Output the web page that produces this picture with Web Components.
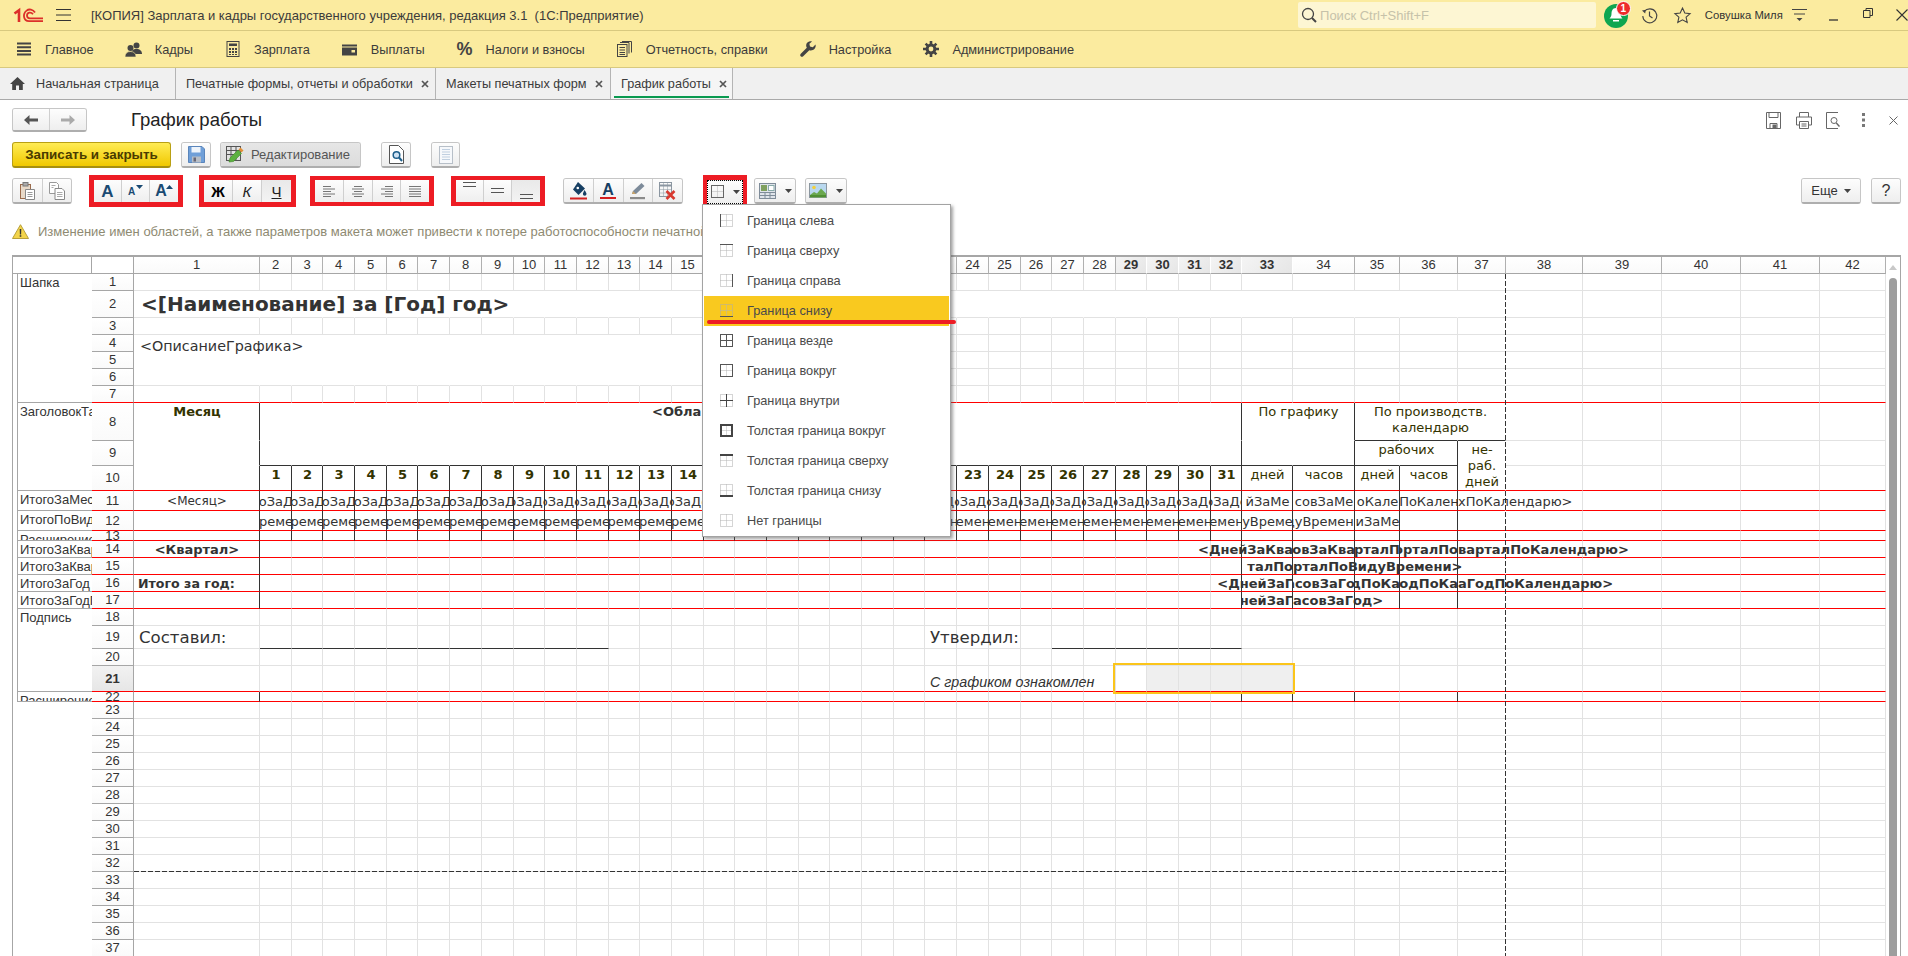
<!DOCTYPE html>
<html lang="ru"><head><meta charset="utf-8"><title>График работы</title>
<style>html,body{margin:0;padding:0;overflow:hidden;background:#fff}</style></head>
<body>
<x-app>
  <x-titlebar slot="top"></x-titlebar>
  <x-menubar slot="top"></x-menubar>
  <x-tabs slot="top"></x-tabs>
  <x-formhead slot="top"></x-formhead>
  <x-cmdbar slot="top"></x-cmdbar>
  <x-toolbar slot="top"></x-toolbar>
  <x-warning slot="top"></x-warning>
  <x-sheet slot="main"></x-sheet>
  <x-bordermenu slot="over"></x-bordermenu>
</x-app>
<script>
const def=(name,css,html)=>customElements.define(name,class extends HTMLElement{
  constructor(){super();this.attachShadow({mode:'open'});}
  connectedCallback(){this.shadowRoot.innerHTML='<style>'+css+'</style>'+(typeof html==='function'?html(this):html);}
});
const bi=(solid)=>`<rect x=".5" y=".5" width="12" height="12" fill="none" stroke="#aaa" stroke-dasharray="1 1"/><path d="M6.500 .5V12.500M.5 6.500H12.500" stroke="#b5b5b5" stroke-dasharray="1 1"/>`+solid;
const ICONS={
 logo:[30,15,`<g fill="none" stroke="#dc2f2a"><path d="M1.500 5.500 6 2.200V14" stroke-width="2.600"/><path d="M22 4.500C20 1.400 16 .6 13.600 2.600 9.600 5.600 10 13 16 13.200H30" stroke-width="1.800"/><path d="M20 6.200C18 3.600 14 4.200 14 7.600 14 10 15.800 10.400 17 10.400H30" stroke-width="1.800"/></g>`],
 burger:[15,12,`<path d="M0 .5H15M0 6H15M0 11.500H15" stroke="#333" stroke-width="1"/>`],
 search:[16,17,`<circle cx="7" cy="7" r="5.500" fill="none" stroke="#444" stroke-width="1.300"/><path d="M11 11l4 4" stroke="#444" stroke-width="2"/>`],
 bell:[26,26,`<ellipse cx="12" cy="14" rx="12" ry="12" fill="#0fa650"/><path d="M12 6c-3.500 0-4.500 3-4.500 6 0 2.500-1.200 3.500-2 4.500H18.500c-.8-1-2-2-2-4.500 0-3-1-6-4.500-6z" fill="#fff"/><path d="M9 18h6v1.500H9z" fill="#fff"/>`],
 history:[17,17,`<path d="M3.300 4.500A7 7 0 1 1 1.800 9" fill="none" stroke="#444" stroke-width="1.100"/><path d="M1 3.500 4.800 2.800 4.200 6.500z" fill="#444"/><path d="M8.500 4.500V9l3 2" fill="none" stroke="#444" stroke-width="1.200"/>`],
 star:[17,17,`<path d="M8.500 1l2.300 5 5.300.6-4 3.600 1.100 5.300-4.700-2.700-4.700 2.700 1.100-5.300-4-3.600 5.300-.6z" fill="none" stroke="#444" stroke-width="1.100"/>`],
 usermenu:[15,12,`<path d="M0 .5H15M2 5H13" stroke="#444"/><path d="M4.500 9h6L7.500 12z" fill="#444"/>`],
 min:[9,2,`<path d="M0 1H9" stroke="#333" stroke-width="1.300"/>`],
 restore:[10,10,`<path d="M.5 2.500h6.500v7H.5zM3 2.500V.5h6.500v7H7" fill="none" stroke="#333"/>`],
 closew:[12,12,`<path d="M.5.5l11 11M11.500.5l-11 11" stroke="#333" stroke-width="1.100"/>`],
 m_main:[16,14,`<path d="M1 1.500H15M1 5.200H15M1 8.900H15M1 12.600H15" stroke="#444" stroke-width="2"/>`],
 m_people:[17,15,`<circle cx="11.500" cy="3.500" r="3" fill="#444"/><path d="M6 12c0-3 2-5 5.500-5S17 9 17 12z" fill="#444"/><circle cx="5.500" cy="6" r="3" fill="#444"/><path d="M0 15c0-3.500 2-5.500 5.500-5.500S11 11.500 11 15z" fill="#444" stroke="#fbeb9f" stroke-width=".6"/>`],
 m_calc:[14,16,`<rect x="1" y=".5" width="12" height="15" fill="none" stroke="#444"/><path d="M3 2.500h8v2.500H3z" fill="#444"/><path d="M3 7h2v2H3zM6 7h2v2H6zM9 7h2v2H9zM3 10h2v2H3zM6 10h2v2H6zM9 10h2v2H9zM3 13h2v1H3zM6 13h2v1H6zM9 13h2v1H9z" fill="#444"/>`],
 m_wallet:[15,13,`<path d="M0 1.500h15v2H0z" fill="#444"/><path d="M0 4.500h15v8H0z" fill="#444"/><rect x="9.500" y="7" width="3.500" height="2.500" fill="#fbeb9f"/>`],
 m_docs:[15,16,`<g fill="none" stroke="#444"><rect x=".5" y="3.500" width="9.500" height="12"/><path d="M3 1.500h9v11M5 .5h9.500v11"/><path d="M2.500 6.500h5.500M2.500 9h5.500M2.500 11.500h5.500M2.500 13.500h5.500"/></g>`],
 m_wrench:[16,16,`<path d="M15.500 3.500 12.800 6.200 10 5.500 9.400 2.800 12 .4C9.600-.4 6.600 1 6.200 3.800 6 5 6.400 6 6.800 6.800L.8 12.800C0 13.600 0 14.600.7 15.300 1.400 16 2.400 16 3.200 15.200L9.300 9.200C12.800 10.300 16.600 7.500 15.500 3.500z" fill="#444"/>`],
 m_gear:[16,16,`<g fill="#444"><circle cx="8" cy="8" r="5.400"/><path d="M6.700 0h2.600v3H6.700zM6.700 13h2.600v3H6.700zM0 6.700h3v2.600H0zM13 6.700h3v2.600h-3zM1.700 3.500l1.800-1.800 2 2-1.800 1.800zM10.500 12.300l1.800-1.800 2 2-1.800 1.800zM1.700 12.500l2-2 1.800 1.800-2 2zM10.500 3.700l2-2 1.800 1.800-2 2z"/></g><circle cx="8" cy="8" r="2.400" fill="#fbeb9f"/>`],
 home:[15,13,`<path d="M7.500 0 15 7h-2.200v6H9V8.500H6V13H2.200V7H0z" fill="#444"/>`],
 x:[8,8,`<path d="M1 1l6 6M7 1 1 7" stroke="#555" stroke-width="1.700"/>`],
 back:[14,10,`<path d="M5.500 0v3.500H14v3H5.500V10L0 5z" fill="#555"/>`],
 fwd:[14,10,`<path d="M8.500 0v3.500H0v3h8.500V10L14 5z" fill="#aaa"/>`],
 save:[17,17,`<path d="M.5.500h13.500l2.500 2.500v13.500H.5z" fill="#6f9fd8" stroke="#5a85bb"/><rect x="3.500" y="1" width="9" height="5.500" fill="#eef4fb"/><rect x="4" y="10.500" width="9" height="6" fill="#b8bec6"/><rect x="5.500" y="11.500" width="2.500" height="4" fill="#667"/>`],
 edit:[18,17,`<g fill="none" stroke="#555"><rect x=".5" y=".5" width="14" height="14"/><path d="M.5 4.500H14.500M.5 8.500H14.500M5 .5V14.500M10 .5V14.500"/></g><path d="M3 16l1-4 8-8 3.500 3.500-8 8z" fill="#5cb040" stroke="#3f8a2a" stroke-width=".6"/><path d="M12.500 3.500l2-2 3 3-2 2z" fill="#e28f38"/>`],
 preview:[15,19,`<path d="M.5.500h9l5 5v13H.5z" fill="#fff" stroke="#555"/><circle cx="7.500" cy="10" r="3.300" fill="#cfe2f3" stroke="#1f5f8b" stroke-width="1.500"/><path d="M10 12.500l3 3.500" stroke="#1f5f8b" stroke-width="2"/>`],
 page:[14,18,`<rect x=".5" y=".5" width="13" height="17" fill="#f6f8fb" stroke="#b7bfc8"/><path d="M3 3.500h8M3 6h8M3 8.500h8M3 11h8M3 13.500h8" stroke="#c0cfe0"/>`],
 paste:[15,18,`<rect x=".5" y="2.500" width="10" height="14" fill="#e8d9c8" stroke="#9b6b4b"/><rect x="3" y=".5" width="5" height="3.500" fill="#aaa" stroke="#777"/><path d="M5.500 7.500h9v10h-9z" fill="#fff" stroke="#888"/><path d="M7.500 10.500h5M7.500 12.500h5M7.500 14.500h5" stroke="#999"/>`],
 copy:[16,18,`<path d="M.5.500h7l2 2v9H.5z" fill="#fff" stroke="#999"/><path d="M6 6.500h7l2.500 2.500v8.500H6z" fill="#fff" stroke="#888"/><path d="M8 10.500h5.500M8 12.500h5.500M8 14.500h5.500M2.500 3.500h4M2.500 5.500h2" stroke="#aaa"/>`],
 tri:[7,4,`<path d="M0 0h7L3.500 4z" fill="#1a4a72"/>`],
 triup:[7,4,`<path d="M0 4h7L3.500 0z" fill="#1a4a72"/>`],
 al:[12,11,`<path d="M0 .5H8M0 3H12M0 5.500H8M0 8H12M0 10.500H8" stroke="#666" stroke-width=".9"/>`],
 ac:[12,11,`<path d="M2 .5H10M0 3H12M2 5.500H10M0 8H12M2 10.500H10" stroke="#666" stroke-width=".9"/>`],
 ar:[12,11,`<path d="M4 .5H12M0 3H12M4 5.500H12M0 8H12M4 10.500H12" stroke="#666" stroke-width=".9"/>`],
 aj:[12,11,`<path d="M0 .5H12M0 3H12M0 5.500H12M0 8H12M0 10.500H12" stroke="#666" stroke-width=".9"/>`],
 vt:[13,18,`<path d="M0 .5H13M0 4.500H13" stroke="#555"/>`],
 vm:[13,18,`<path d="M0 6.500H13M0 10.500H13" stroke="#555"/>`],
 vb:[13,18,`<path d="M0 12.500H13M0 16.500H13" stroke="#555"/>`],
 bucket:[17,19,`<path d="M8 1 15 7.500 8.500 14 3 8.500z" fill="#173f63"/><circle cx="7.800" cy="7" r="1.300" fill="#fff"/><path d="M14.500 9c1.300 2 2 3 2 4a1.800 1.800 0 0 1-3.600 0c0-1 .7-2 1.600-4z" fill="#173f63"/><rect x="0" y="16.500" width="17" height="2" fill="#d41f1f"/>`],
 pen:[17,18,`<path d="M3 12l1-3 8.500-8 3 3L7 12z" fill="#7d8b9a"/><path d="M3 12l1-3 3 3z" fill="#c9a46a"/><rect x="1" y="15" width="15" height="2.200" fill="#8b8b8b"/>`],
 tablex:[17,18,`<g fill="none" stroke="#8b96a1"><rect x=".5" y=".5" width="12" height="14"/><path d="M.5 3.500H12.500" stroke-width="2"/><path d="M4.500 .5V14.500M8.500 .5V14.500M.5 7.500H12.500M.5 11H12.500" stroke-dasharray="1 1"/></g><path d="M7.500 9l8 8M15.500 9l-8 8" stroke="#d8392f" stroke-width="2.600"/>`],
 brd:[13,13,bi('<rect x=".5" y=".5" width="12" height="12" fill="none" stroke="#666"/>')],
 arrow:[7,4,`<path d="M0 0h7L3.500 4z" fill="#444"/>`],
 layout:[17,16,`<rect x=".5" y=".5" width="16" height="15" fill="#dfe4ea" stroke="#7f8c99"/><rect x="2" y="2" width="6" height="6" fill="#7fa05f"/><rect x="9.500" y="2.500" width="5.500" height="5" fill="#fff" stroke="#8aa"/><path d="M1 9.500H16M1 12.500H16M6 9V16M11 9V16" stroke="#7f8c99"/>`],
 pict:[18,15,`<rect x=".5" y=".5" width="17" height="14" fill="#b9d8ef" stroke="#8b969f"/><circle cx="5" cy="4.500" r="1.800" fill="#f2cf3d"/><path d="M1 12l4-3 3 1.500 4-5 5 5v4H1z" fill="#6aa84f"/><rect x="1" y="12" width="16" height="2" fill="#4f8f33"/>`],
 o_save:[15,17,`<path d="M.5.500h14v16H.5z" fill="none" stroke="#666"/><path d="M3 .5v5h9v-5M4 16.500v-5h7v5" fill="none" stroke="#666"/><rect x="6.500" y="12.500" width="4" height="4" fill="#666"/>`],
 o_print:[16,17,`<g fill="none" stroke="#666"><path d="M3.500 5V.5h9V5M.5 13V5h15v8h-3M3.500 13H.5"/><path d="M3.500 9.500h9v7h-9zM5.500 12h5M5.500 14h5"/></g>`],
 o_prev:[15,17,`<path d="M12 .5H.5v16H12" fill="none" stroke="#666"/><circle cx="8" cy="8.500" r="3" fill="none" stroke="#666"/><path d="M10.300 11l3.200 3.500" stroke="#666" stroke-width="1.400"/>`],
 o_dots:[3,14,`<path d="M0 0h3v3H0zM0 5.500h3v3H0zM0 11h3v3H0z" fill="#777"/>`],
 o_x:[9,9,`<path d="M.5.500l8 8M8.500.5l-8 8" stroke="#666"/>`],
 warn:[17,15,`<path d="M8.500.7 16.500 14.500H.5z" fill="#f3d44b" stroke="#b8a03a"/><path d="M7.700 5h1.600l-.2 5.500H7.900zM7.700 11.300h1.600v1.500H7.700z" fill="#333"/>`],
 b_left:[13,13,bi('<path d="M.5 0V13" stroke="#555"/>')],
 b_top:[13,13,bi('<path d="M0 .5H13" stroke="#555"/>')],
 b_right:[13,13,bi('<path d="M12.500 0V13" stroke="#555"/>')],
 b_bottom:[13,13,bi('<path d="M0 12.500H13" stroke="#555"/>')],
 b_all:[13,13,'<g fill="none" stroke="#555"><rect x=".5" y=".5" width="12" height="12"/><path d="M6.500 .5V12.500M.5 6.500H12.500"/></g>'],
 b_around:[13,13,bi('<rect x=".5" y=".5" width="12" height="12" fill="none" stroke="#555"/>')],
 b_in:[13,13,bi('<path d="M6.500 0V13M0 6.500H13" stroke="#444"/>')],
 b_tar:[13,13,bi('<rect x="1" y="1" width="11" height="11" fill="none" stroke="#444" stroke-width="2"/>')],
 b_ttop:[13,13,bi('<path d="M0 1H13" stroke="#444" stroke-width="2"/>')],
 b_tbot:[13,13,bi('<path d="M0 12H13" stroke="#444" stroke-width="2"/>')],
 b_none:[13,13,bi('')]
};
def('x-icon',':host{display:inline-flex;flex:none;line-height:0}svg{display:block;overflow:visible}',el=>{
  const [w,h,b]=ICONS[el.getAttribute('name')];
  return `<svg xmlns="http://www.w3.org/2000/svg" width="${w}" height="${h}" viewBox="0 0 ${w} ${h}">${b}</svg>`;
});

def('x-app',':host{display:block;position:relative;width:1908px;height:956px;overflow:hidden;font-family:"Liberation Sans",Arial,sans-serif;font-size:13px;color:#333;background:#fff}.col{display:flex;flex-direction:column;height:100%}.main{flex:1;min-height:0;display:flex}',
 `<div class="col"><slot name="top"></slot><div class="main"><slot name="main"></slot></div></div><slot name="over"></slot>`);

def('x-titlebar',`:host{display:flex;align-items:center;height:30px;background:#fbeb9f;border-bottom:1px solid #d8c97f;box-sizing:content-box;position:relative}
 .logo{margin-left:13px}.burger{margin-left:13px}.t{margin-left:20px;white-space:pre;color:#3b3b3b;width:650px}
 .search{margin-left:564px;width:301px;height:26px;background:#fdf6d3;border-radius:2px;display:flex;align-items:center;box-sizing:border-box;padding-left:3px;color:#c6c2aa}
 .search span{margin-left:3px}.bell{margin-left:8px;position:relative;height:26px}
 .badge{position:absolute;left:12px;top:-1px;width:13px;height:13px;border-radius:50%;background:#ee2b2b;border:1px solid #fff;color:#fff;font-size:10px;font-weight:bold;display:flex;align-items:center;justify-content:center;line-height:1}
 .u{font-size:11.3px;color:#333;white-space:nowrap;width:80px}`,
 `<x-icon class="logo" name="logo"></x-icon><x-icon class="burger" name="burger"></x-icon><span class="t">[КОПИЯ] Зарплата и кадры государственного учреждения, редакция 3.1  (1С:Предприятие)</span>
 <div class="search"><x-icon name="search"></x-icon><span>Поиск Ctrl+Shift+F</span></div>
 <div class="bell"><x-icon name="bell"></x-icon><span class="badge">1</span></div>
 <x-icon name="history" style="margin-left:11px"></x-icon><x-icon name="star" style="margin-left:16px"></x-icon>
 <span class="u" style="margin-left:14px">Совушка Миля</span>
 <x-icon name="usermenu" style="margin-left:8px"></x-icon><x-icon name="min" style="margin-left:22px;margin-top:9px"></x-icon><x-icon name="restore" style="margin-left:25px;margin-top:-4px"></x-icon><x-icon name="closew" style="margin-left:23px"></x-icon>`);

def('x-menuitem',':host{display:flex;align-items:center;white-space:nowrap;color:#3b3b3b}.i{width:16px;height:16px;margin-right:13px;display:flex;align-items:center;justify-content:center;flex:none}',
 el=>`<span class="i"><slot name="i"></slot></span><slot></slot>`);
def('x-menubar',':host{display:flex;align-items:center;height:36px;gap:32px;padding-left:16px;background:#fbeb9f;border-bottom:1px solid #d8c97f;font-size:12.75px}',
 `<x-menuitem><x-icon slot="i" name="m_main"></x-icon>Главное</x-menuitem>
 <x-menuitem><x-icon slot="i" name="m_people"></x-icon>Кадры</x-menuitem>
 <x-menuitem><x-icon slot="i" name="m_calc"></x-icon>Зарплата</x-menuitem>
 <x-menuitem><x-icon slot="i" name="m_wallet"></x-icon>Выплаты</x-menuitem>
 <x-menuitem><span slot="i" style="font-size:18px;font-weight:bold;color:#444">%</span>Налоги и взносы</x-menuitem>
 <x-menuitem><x-icon slot="i" name="m_docs"></x-icon>Отчетность, справки</x-menuitem>
 <x-menuitem><x-icon slot="i" name="m_wrench"></x-icon>Настройка</x-menuitem>
 <x-menuitem><x-icon slot="i" name="m_gear"></x-icon>Администрирование</x-menuitem>`);

def('x-tab',':host{display:flex;align-items:center;height:100%;box-sizing:border-box;border-right:1px solid #b4b4b4;white-space:nowrap;color:#3b3b3b;position:relative;flex:none}:host([active]){background:#f5f5f5}:host([active])::after{content:"";position:absolute;left:3px;right:3px;bottom:1px;height:2px;background:#0a9a50}',
 `<slot></slot>`);
def('x-tabs',':host{display:flex;height:31px;background:#f0f0f0;border-bottom:1px solid #a9a9a9;font-size:12.7px}',
 `<x-tab style="width:176px;padding-left:10px"><x-icon name="home" style="margin-right:11px"></x-icon>Начальная страница</x-tab>
 <x-tab style="width:260px;padding-left:10px">Печатные формы, отчеты и обработки<x-icon name="x" style="margin-left:8px"></x-icon></x-tab>
 <x-tab style="width:175px;padding-left:10px">Макеты печатных форм<x-icon name="x" style="margin-left:8px"></x-icon></x-tab>
 <x-tab active style="width:122px;padding-left:10px">График работы<x-icon name="x" style="margin-left:8px"></x-icon></x-tab>`);

const SEGCSS=':host{display:flex;align-items:center;justify-content:center;box-sizing:border-box;height:100%;flex:none;background:linear-gradient(#fdfdfd,#eeeeee);color:#333}:host([pressed]){background:linear-gradient(#e9e9e9,#f3f3f3)}';
def('x-seg',SEGCSS,'<slot></slot>');
def('x-btngroup',':host{display:inline-flex;flex:none;box-sizing:border-box;height:26px;border:1px solid #c6c6c6;border-bottom:2px solid #aeaeae;border-radius:3px;overflow:hidden;background:#f5f5f5}:host([flat]){border:0;border-radius:0;height:100%}::slotted(x-seg:not(:last-child)){border-right:1px solid #cfcfcf}','<slot></slot>');
def('x-redbox',':host{display:inline-flex;flex:none;box-sizing:border-box;border:5px solid #ed1c24}','<slot></slot>');

def('x-formhead',`:host{display:flex;align-items:center;height:24px;margin-top:8px;padding-left:12px;padding-right:8px;box-sizing:border-box}
 h1{font:normal 18.5px "Liberation Sans",Arial,sans-serif;margin:0 0 0 44px;color:#222}
 .r{margin-left:auto;display:flex;align-items:center}`,
 `<x-btngroup style="height:24px"><x-seg style="width:37px"><x-icon name="back"></x-icon></x-seg><x-seg style="width:36px"><x-icon name="fwd"></x-icon></x-seg></x-btngroup>
 <h1>График работы</h1>
 <div class="r"><x-icon name="o_save"></x-icon><x-icon name="o_print" style="margin-left:15px"></x-icon><x-icon name="o_prev" style="margin-left:14px"></x-icon><x-icon name="o_dots" style="margin-left:21px"></x-icon><x-icon name="o_x" style="margin-left:24px;margin-right:2px"></x-icon></div>`);

def('x-cmdbar',`:host{display:flex;align-items:center;height:26px;margin-top:10px;padding-left:12px}
 .y{display:flex;align-items:center;justify-content:center;box-sizing:border-box;width:159px;height:26px;background:linear-gradient(#ffec55,#f0c800);border:1px solid #b9a014;border-bottom:2px solid #a68f10;border-radius:3px;color:#4a3b00;font-weight:bold;font-size:13.4px;white-space:nowrap}`,
 `<div class="y">Записать и закрыть</div>
 <x-btngroup style="margin-left:10px"><x-seg style="width:28px"><x-icon name="save"></x-icon></x-seg></x-btngroup>
 <x-btngroup style="margin-left:9px"><x-seg pressed style="width:139px;color:#555;gap:7px;justify-content:flex-start;padding-left:5px;background:linear-gradient(#e6e6e6,#dcdcdc)"><x-icon name="edit"></x-icon>Редактирование</x-seg></x-btngroup>
 <x-btngroup style="margin-left:20px"><x-seg style="width:28px"><x-icon name="preview"></x-icon></x-seg></x-btngroup>
 <x-btngroup style="margin-left:20px"><x-seg style="width:27px"><x-icon name="page"></x-icon></x-seg></x-btngroup>`);

def('x-toolbar',`:host{display:flex;align-items:center;height:32px;margin-top:7px;padding-left:12px;padding-right:7px}
 .A{font-weight:bold;color:#1a4a72;position:relative;line-height:1}
 .s{display:flex;align-items:flex-end;gap:1px}
 .B{font-weight:bold;color:#000;font-size:15px}.I{font-style:italic;font-size:15px;color:#222}.U{text-decoration:underline;font-size:15px;color:#222}
 .AU{font-weight:bold;font-size:16px;color:#173f63;border-bottom:2px solid #d41f1f;line-height:15px;padding:0 2px}
 .focus{box-sizing:border-box;width:36px;height:24px;border:1px dotted #000;display:flex;align-items:center;justify-content:center;gap:9px;background:linear-gradient(#fdfdfd,#eee)}`,
 `<x-btngroup style="width:60px"><x-seg style="flex:1"><x-icon name="paste"></x-icon></x-seg><x-seg style="flex:1"><x-icon name="copy"></x-icon></x-seg></x-btngroup>
 <x-redbox style="margin-left:17px;height:32px"><x-btngroup flat>
   <x-seg style="width:28px"><span class="A" style="font-size:17px">А</span></x-seg>
   <x-seg style="width:28px"><span class="s"><span class="A" style="font-size:10px">А</span><x-icon name="tri" style="margin-bottom:8px"></x-icon></span></x-seg>
   <x-seg style="width:28px"><span class="s"><span class="A" style="font-size:16px">А</span><x-icon name="triup" style="margin-bottom:10px;margin-left:-2px"></x-icon></span></x-seg>
 </x-btngroup></x-redbox>
 <x-redbox style="margin-left:16px;height:32px"><x-btngroup flat>
   <x-seg style="width:29px"><span class="B">Ж</span></x-seg><x-seg style="width:29px"><span class="I">К</span></x-seg><x-seg pressed style="width:29px"><span class="U">Ч</span></x-seg>
 </x-btngroup></x-redbox>
 <x-redbox style="margin-left:14px;height:30px;border-width:4px 5px"><x-btngroup flat>
   <x-seg style="width:29px"><x-icon name="al"></x-icon></x-seg><x-seg style="width:29px"><x-icon name="ac"></x-icon></x-seg><x-seg style="width:28px"><x-icon name="ar"></x-icon></x-seg><x-seg style="width:28px"><x-icon name="aj"></x-icon></x-seg>
 </x-btngroup></x-redbox>
 <x-redbox style="margin-left:17px;height:30px;border-width:4px 5px"><x-btngroup flat>
   <x-seg style="width:28px"><x-icon name="vt"></x-icon></x-seg><x-seg style="width:28px"><x-icon name="vm"></x-icon></x-seg><x-seg pressed style="width:28px"><x-icon name="vb"></x-icon></x-seg>
 </x-btngroup></x-redbox>
 <x-btngroup style="margin-left:18px;width:120px"><x-seg style="flex:1"><x-icon name="bucket"></x-icon></x-seg><x-seg style="flex:1"><span class="AU">А</span></x-seg><x-seg style="flex:1"><x-icon name="pen"></x-icon></x-seg><x-seg style="flex:1"><x-icon name="tablex"></x-icon></x-seg></x-btngroup>
 <x-redbox style="margin-left:20px;height:33px;width:44px;border-width:5px 4px 4px"><div class="focus"><x-icon name="brd"></x-icon><x-icon name="arrow"></x-icon></div></x-redbox>
 <x-btngroup style="margin-left:7px;width:42px"><x-seg style="flex:1;gap:9px"><x-icon name="layout"></x-icon><x-icon name="arrow"></x-icon></x-seg></x-btngroup>
 <x-btngroup style="margin-left:9px;width:42px"><x-seg style="flex:1;gap:9px"><x-icon name="pict"></x-icon><x-icon name="arrow"></x-icon></x-seg></x-btngroup>
 <x-btngroup style="width:60px;margin-left:auto"><x-seg style="flex:1;gap:6px">Еще<x-icon name="arrow"></x-icon></x-seg></x-btngroup>
 <x-btngroup style="margin-left:10px;width:30px"><x-seg style="flex:1;font-size:16px">?</x-seg></x-btngroup>`);

def('x-warning',':host{display:flex;align-items:center;height:48px;padding-left:12px;color:#8e8a72;white-space:nowrap;overflow:hidden}span{margin-left:9px}',
 `<x-icon name="warn"></x-icon><span>Изменение имен областей, а также параметров макета может привести к потере работоспособности печатной формы</span>`);

/* spreadsheet */
(function(){
 const ends=[260];for(let k=2;k<=32;k++)ends.push(Math.round(260+(k-1)*31.69));
 ends.push(1293,1355,1400,1458,1506,1583,1662,1741,1820,1886);
 const widths=ends.map((e,i)=>e-(i?ends[i-1]:134));
 const rh=[17,27,17,17,17,17,17,38,25,25,20,20,10,17,17,17,17,17,23,17,26,10];while(rh.length<37)rh.push(17);
 const RED=new Set([7,10,11,12,13,14,15,16,17,21,22]);
 const L='#e2e2e2',D='#333',N='transparent';
 const right=(r,c)=>{
  if(c===37)return N;
  if(c===1)return (r>=8&&r<=17)||r===22?D:(r===2||(r>=4&&r<=6)?N:L);
  if(c<=31){if(r>=10&&r<=13)return D;if(r===8||r===9||r===2||(r>=4&&r<=6&&c<=18))return N;return L;}
  if(c===32||c===34)return (r>=8&&r<=17)||r===22?D:(r===2?N:L);
  if(c===33||c===35)return (r>=10&&r<=17)||(c===33&&r===22)?D:(r===2||r===8||r===9?N:L);
  if(c===36)return (r>=9&&r<=17)||r===22?D:(r===2||r===8?N:L);
  return L;
 };
 const bottom=(r,c)=>{
  if(RED.has(r))return '#f00';
  if(r>=4&&r<=5&&c<=18)return N;
  if(c<=37){
   if(r===8)return c>=35?D:N;
   if(r===9)return c===1?N:(c<=36?D:N);
  }
  if(r===19&&((c>=2&&c<=12)||(c>=27&&c<=32)))return D;
  return L;
 };
 const sel=new Set([29,30,31,32,33]);
 let h='';
 h+=`<div class="corner" style="grid-area:1/1"></div><div class="corner" style="grid-area:1/2"></div>`;
 for(let c=1;c<=42;c++)h+=`<div class="ch${sel.has(c)?' on':''}" style="grid-area:1/${c+2}">${c}</div>`;
 const regions=[[1,7,'Шапка'],[8,10,'ЗаголовокТаблицы'],[11,11,'ИтогоЗаМесяц'],[12,12,'ИтогоПоВидуВремени'],[13,13,'Расширение'],[14,14,'ИтогоЗаКвартал'],[15,15,'ИтогоЗаКвартал'],[16,16,'ИтогоЗаГод'],[17,17,'ИтогоЗаГодП'],[18,21,'Подпись'],[22,22,'Расширение']];
 for(const [a,b,t] of regions)h+=`<div class="reg" style="grid-area:${a+1}/1/${b+2}/2"><span>${t}</span></div>`;
 for(let r=1;r<=37;r++){
  const red=RED.has(r);
  h+=`<div class="rh${r===21?' on':''}" style="grid-area:${r+1}/2;${red?'border-bottom-color:#f00':''}"><span>${r}</span></div>`;
  for(let c=1;c<=42;c++){
   const bg=(r===21&&c>=30&&c<=33)?'background:#efefef;':'';
   h+=`<div class="c" style="grid-area:${r+1}/${c+2};border-right-color:${right(r,c)};border-bottom-color:${bottom(r,c)};${bg}"></div>`;
  }
 }
 const T=(r1,r2,c1,c2,text,cls='',st='')=>`<div class="t ${cls}" style="grid-area:${r1+1}/${c1+2}/${r2+2}/${c2+3};${st}"><span>${text}</span></div>`;
 h+=T(2,2,1,37,'&lt;[Наименование] за [Год] год&gt;','b vc','padding-left:7px;font-size:20px');
 h+=T(4,6,1,18,'&lt;ОписаниеГрафика&gt;','','padding:3px 0 0 6px;line-height:17px;font-size:14.3px');
 h+=T(8,10,1,1,'Месяц','b hc ol');
 h+=T(8,9,2,16,'&lt;Обла','b','padding-left:392px');
 h+=T(8,9,33,34,'По графику','hc ol');
 h+=T(8,8,35,37,'По производств.<br>календарю','hc ol ct','line-height:16px;padding-top:1px');
 h+=T(9,9,35,36,'рабочих','hc ol');
 h+=T(9,10,37,37,'не-<br>раб.<br>дней','hc ol ct','line-height:16px;padding-top:1px');
 for(let c=2;c<=32;c++)h+=T(10,10,c,c,String(c-1),'b hc ol');
 h+=T(10,10,33,33,'дней','hc ol');h+=T(10,10,34,34,'часов','hc ol');h+=T(10,10,35,35,'дней','hc ol');h+=T(10,10,36,36,'часов','hc ol');
 h+=T(11,11,1,1,'&lt;Месяц&gt;','hc vc','font-size:12px');
 for(let c=2;c<=32;c++){h+=T(11,11,c,c,c<10?'оЗаД':'оЗаДе','hc vc');h+=T(12,12,c,c,c<=15?'реме':'емен','hc vc');}
 [[33,'йЗаМе'],[34,'совЗаМе'],[35,'оКале'],[36,'ПоКален']].forEach(([c,t])=>h+=T(11,11,c,c,t,'hc vc'));
 h+=T(11,11,37,39,'хПоКалендарю&gt;','vc');
 [[33,'уВреме'],[34,'дуВремени'],[35,'иЗаМе']].forEach(([c,t])=>h+=T(12,12,c,c,t,'hc vc'));
 h+=T(14,14,1,1,'&lt;Квартал&gt;','b hc vc');
 h+=T(14,14,26,33,'&lt;ДнейЗаКва','b hr vc');h+=T(14,14,34,34,'овЗаКва','b hr vc');h+=T(14,14,35,35,'рталП','b hr vc');h+=T(14,14,36,36,'орталПо','b hr vc');h+=T(14,14,37,41,'варталПоКалендарю&gt;','b vc');
 h+=T(15,15,33,33,'талПо','b hr vc');h+=T(15,15,34,37,'рталПоВидуВремени&gt;','b vc');
 h+=T(16,16,1,1,'Итого за год:','b vc','padding-left:4px;font-size:12.6px');
 h+=T(16,16,26,33,'&lt;ДнейЗаГ','b hr vc');h+=T(16,16,34,34,'асовЗаГо','b hr vc');h+=T(16,16,35,35,'дПоКа','b hr vc');h+=T(16,16,36,36,'ГодПоКа','b hr vc');h+=T(16,16,37,41,'аГодПоКалендарю&gt;','b vc');
 h+=T(17,17,33,33,'нейЗаГ','b hr vc');h+=T(17,17,34,37,'асовЗаГод&gt;','b vc');
 h+=T(19,19,1,5,'Составил:','vc','padding-left:5px;font-size:16.6px');
 h+=T(19,19,23,30,'Утвердил:','vc','padding-left:5px;font-size:16.6px');
 h+=T(21,21,23,28,'С графиком ознакомлен','vc it','padding:6px 0 0 5px');
 h+=`<div class="dash-h" style="grid-area:33/3/33/40"></div><div class="dash-v" style="grid-area:2/39/39/40"></div>`;
 h+=`<div class="selbox" style="grid-area:22/31/22/36"></div>`;
 const css=`:host{display:flex;flex:1;min-width:0;margin-left:12px;margin-right:7px;border:1px solid #a6a6a6;border-top-width:2px;border-bottom:0;overflow:hidden;background:#fff}
 .g{display:grid;grid-template-columns:79px 42px ${widths.map(w=>w+'px').join(' ')};grid-template-rows:17px ${rh.map(x=>x+'px').join(' ')};flex:none;font-family:"DejaVu Sans",sans-serif;font-size:13px;color:#333;overflow:hidden;height:100%}
 .corner{border-right:1px solid #a6a6a6;border-bottom:1px solid #a6a6a6;box-sizing:border-box}
 .ch{box-sizing:border-box;border-right:1px solid #b0b0b0;border-bottom:1px solid #a6a6a6;background:linear-gradient(#fff,#fafafa);font:13px/16px "Liberation Sans",Arial,sans-serif;text-align:center;color:#333;overflow:hidden}
 .ch.on{background:linear-gradient(135deg,#f4f4f4,#e6e6e6);font-weight:bold;border-right-color:#fff}
 .rh{box-sizing:border-box;border-right:1px solid #a6a6a6;border-bottom:1px solid #a6a6a6;background:linear-gradient(#fff,#fafafa);font:13px/16px "Liberation Sans",Arial,sans-serif;display:flex;align-items:center;justify-content:center;overflow:hidden;color:#333}
 .rh.on{background:linear-gradient(#f2f2f2,#e6e6e6);font-weight:bold}
 .reg{box-sizing:border-box;margin-left:4px;border-left:1px solid #a6a6a6;border-bottom:1px solid #a6a6a6;font:13px/15px "Liberation Sans",Arial,sans-serif;padding:1px 0 0 2px;overflow:hidden;white-space:nowrap;background:#fff}
 .c{box-sizing:border-box;border-right:1px solid ${L};border-bottom:1px solid ${L}}
 .t{overflow:hidden;white-space:nowrap;display:flex;line-height:17px;min-width:0;min-height:0;box-sizing:border-box}
 .t span{flex:none}
 .b{font-weight:bold}.hc{justify-content:center;text-align:center}.hr{justify-content:flex-end}.vc{align-items:center}.ct{align-items:flex-start}
 .ol{color:#333300}.it{font:italic 14.3px "Liberation Sans",Arial,sans-serif}
 .dash-h{background:repeating-linear-gradient(90deg,#333 0 5px,transparent 5px 7px) left bottom/100% 1px no-repeat}
 .dash-v{background:repeating-linear-gradient(180deg,#333 0 5px,transparent 5px 7px) right top/1px 100% no-repeat}
 .selbox{outline:2px solid #fbc51a;margin:-1px 0 0 -1px}
 .sb{width:14px;flex:none;position:relative;height:100%;background:#fff}
 .up{width:0;height:0;margin:8px auto 0;border:4px solid transparent;border-top:0;border-bottom:5px solid #c8c8c8}
 .thumb{width:8px;margin:8px auto 0;height:800px;background:#9e9e9e;border-radius:4px 4px 0 0}`;
 def('x-sheet',css,`<div class="g">${h}</div><div class="sb"><div class="up"></div><div class="thumb"></div></div>`);
})();

def('x-border-item',':host{display:flex;align-items:center;height:30px;box-sizing:border-box;padding:0 0 2px 16px;margin:0 1px;color:#4a4a4a;white-space:nowrap;font-size:12.75px}:host([hl]){background:#f9c91f}.g{margin-right:14px;display:flex}',
 `<span class="g"><slot name="i"></slot></span><slot></slot>`);
def('x-bordermenu',`:host{position:absolute;left:702px;top:204px;width:249px;height:333px;box-sizing:border-box;background:#fff;border:1px solid #a3a3a3;box-shadow:2px 2px 3px rgba(90,90,90,.55);padding-top:1px;z-index:5;display:block}
 .line{position:absolute;left:4px;top:115px;width:249px;height:4px;background:#ed1c24;border-radius:2px}`,
 ()=>[['b_left','Граница слева'],['b_top','Граница сверху'],['b_right','Граница справа'],['b_bottom','Граница снизу'],['b_all','Граница везде'],['b_around','Граница вокруг'],['b_in','Граница внутри'],['b_tar','Толстая граница вокруг'],['b_ttop','Толстая граница сверху'],['b_tbot','Толстая граница снизу'],['b_none','Нет границы']]
 .map(([i,t],n)=>`<x-border-item${n===3?' hl':''}><x-icon slot="i" name="${i}"></x-icon>${t}</x-border-item>`).join('')+'<div class="line"></div>');
</script>
</body></html>
